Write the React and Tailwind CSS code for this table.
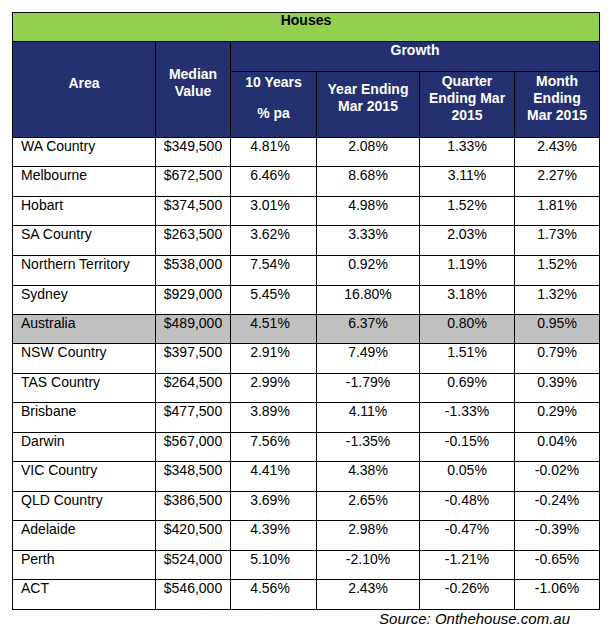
// Houses growth table, Mar 2015
const rows = [
  { area: "WA Country", value: "$349,500", y10: "4.81%", year: "2.08%", qtr: "1.33%", month: "2.43%", h: 28 },
  { area: "Melbourne", value: "$672,500", y10: "6.46%", year: "8.68%", qtr: "3.11%", month: "2.27%", h: 29 },
  { area: "Hobart", value: "$374,500", y10: "3.01%", year: "4.98%", qtr: "1.52%", month: "1.81%", h: 28 },
  { area: "SA Country", value: "$263,500", y10: "3.62%", year: "3.33%", qtr: "2.03%", month: "1.73%", h: 29 },
  { area: "Northern Territory", value: "$538,000", y10: "7.54%", year: "0.92%", qtr: "1.19%", month: "1.52%", h: 29 },
  { area: "Sydney", value: "$929,000", y10: "5.45%", year: "16.80%", qtr: "3.18%", month: "1.32%", h: 28 },
  { area: "Australia", value: "$489,000", y10: "4.51%", year: "6.37%", qtr: "0.80%", month: "0.95%", h: 28, total: true },
  { area: "NSW Country", value: "$397,500", y10: "2.91%", year: "7.49%", qtr: "1.51%", month: "0.79%", h: 29 },
  { area: "TAS Country", value: "$264,500", y10: "2.99%", year: "-1.79%", qtr: "0.69%", month: "0.39%", h: 28 },
  { area: "Brisbane", value: "$477,500", y10: "3.89%", year: "4.11%", qtr: "-1.33%", month: "0.29%", h: 29 },
  { area: "Darwin", value: "$567,000", y10: "7.56%", year: "-1.35%", qtr: "-0.15%", month: "0.04%", h: 28 },
  { area: "VIC Country", value: "$348,500", y10: "4.41%", year: "4.38%", qtr: "0.05%", month: "-0.02%", h: 29 },
  { area: "QLD Country", value: "$386,500", y10: "3.69%", year: "2.65%", qtr: "-0.48%", month: "-0.24%", h: 28 },
  { area: "Adelaide", value: "$420,500", y10: "4.39%", year: "2.98%", qtr: "-0.47%", month: "-0.39%", h: 29 },
  { area: "Perth", value: "$524,000", y10: "5.10%", year: "-2.10%", qtr: "-1.21%", month: "-0.65%", h: 28 },
  { area: "ACT", value: "$546,000", y10: "4.56%", year: "2.43%", qtr: "-0.26%", month: "-1.06%", h: 29 },
];

const head = "bg-[#24306f] text-white font-bold flex items-center justify-center text-center pb-[13px] leading-[17px]";

export default function App() {
  return (
    <div className="min-h-screen bg-white pt-[12px] pl-[12px] font-['Liberation_Sans',Arial,sans-serif] text-[14px] text-black">
      <div className="w-[588px]">
        <div className="grid grid-cols-[142px_74px_85px_102px_94px_84px] gap-px bg-black p-px">
          {/* Title */}
          <div className="col-span-6 h-[28px] bg-[#92d050] font-bold flex items-center justify-center pb-[14px] leading-4">
            Houses
          </div>

          {/* Header */}
          <div className={`${head} row-span-2`}>Area</div>
          <div className={`${head} row-span-2`}>
            Median
            <br />
            Value
          </div>
          <div className={`${head} col-span-4 h-[29px] leading-4`}>Growth</div>
          <div className={`${head} h-[65px] flex-col leading-4`}>
            <div>10 Years</div>
            <div className="mt-[14px]">% pa</div>
          </div>
          <div className={`${head} h-[65px]`}>
            Year Ending
            <br />
            Mar 2015
          </div>
          <div className={`${head} h-[65px]`}>
            Quarter
            <br />
            Ending Mar
            <br />
            2015
          </div>
          <div className={`${head} h-[65px]`}>
            Month
            <br />
            Ending
            <br />
            Mar 2015
          </div>

          {/* Rows */}
          {rows.map((r) => {
            const cell =
              "flex items-center pb-[13px] leading-4 " +
              (r.total ? "bg-[#c0c0c0] " : "bg-white ") +
              (r.h === 29 ? "h-[29px]" : "h-[28px]");
            return [
              <div key={r.area + "a"} className={`${cell} pl-[8px]`}>{r.area}</div>,
              <div key={r.area + "v"} className={`${cell} justify-center`}>{r.value}</div>,
              <div key={r.area + "t"} className={`${cell} justify-center pr-[7px]`}>{r.y10}</div>,
              <div key={r.area + "y"} className={`${cell} justify-center`}>{r.year}</div>,
              <div key={r.area + "q"} className={`${cell} justify-center`}>{r.qtr}</div>,
              <div key={r.area + "m"} className={`${cell} justify-center`}>{r.month}</div>,
            ];
          })}
        </div>

        {/* Source */}
        <div className="text-right pr-[30px] italic text-[15px] leading-[17px]">
          Source: Onthehouse.com.au
        </div>
      </div>
    </div>
  );
}
